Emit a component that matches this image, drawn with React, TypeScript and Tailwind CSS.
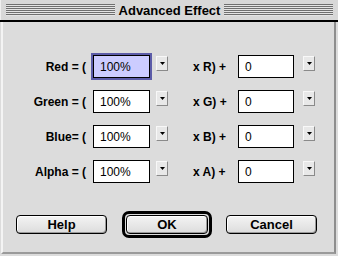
const rows = [
  { label: 'Red = (', right: 'x R) +', focused: true },
  { label: 'Green = (', right: 'x G) +', focused: false },
  { label: 'Blue= (', right: 'x B) +', focused: false },
  { label: 'Alpha = (', right: 'x A) +', focused: false },
]

const font = { fontFamily: '"Liberation Sans", Arial, sans-serif' }

const Stripes = () => (
  <div className="flex-1 h-[12px] bg-[repeating-linear-gradient(to_bottom,#6f6f6f_0px,#6f6f6f_1px,#e4e4e4_1px,#e4e4e4_2px)]" />
)

const Arrow = () => (
  <div className="w-[12px] h-[15px] bg-[#e8e8e8] border border-t-[#f8f8f8] border-l-[#f8f8f8] border-r-[#8a8a8a] border-b-[#8a8a8a] flex items-center justify-center">
    <svg width="5" height="3" viewBox="0 0 5 3">
      <path d="M0 0H5L2.5 3Z" fill="#000" />
    </svg>
  </div>
)

const Field = ({ value, focused, w }: { value: string; focused?: boolean; w: string }) => (
  <div
    className={`${w} h-[23px] flex items-center border border-black pl-[6px] text-[12px] text-black ${
      focused ? 'bg-[#ccccff] outline outline-2 outline-[#5c5ca8]' : 'bg-white'
    }`}
  >
    {value}
  </div>
)

const Button = ({ label, w }: { label: string; w: string }) => (
  <div
    className={`${w} h-[19px] rounded-[4px] border border-black bg-[linear-gradient(to_bottom,#f4f4f4,#dcdcdc)] shadow-[inset_-1px_-1px_0_#9a9a9a,inset_1px_1px_0_#ffffff] flex items-center justify-center text-[13px] font-bold text-black`}
  >
    {label}
  </div>
)

export default function App() {
  return (
    <div className="w-[338px] h-[256px] bg-[#dcdcdc] flex flex-col overflow-hidden" style={font}>
      {/* title bar */}
      <div className="h-[20px] flex items-center px-[5px] bg-[#d8d8d8] border-l border-[#efefef]">
        <Stripes />
        <div className="px-[4px] text-[13px] font-bold text-black leading-none">Advanced Effect</div>
        <Stripes />
      </div>
      <div className="h-[2px] bg-black" />

      {/* body */}
      <div className="flex-1 flex flex-col border-l-2 border-l-[#f4f4f4] border-r-2 border-r-[#8e8e8e] border-b-2 border-b-[#9a9a9a] ml-[1px] mr-[2px] mb-[2px]">
        <div className="flex flex-col gap-[12px] pt-[33px]">
          {rows.map((r) => (
            <div key={r.label} className="flex items-center h-[23px]">
              <div className="w-[83px] text-right text-[12px] font-bold text-black">{r.label}</div>
              <div className="ml-[7px]">
                <Field value="100%" focused={r.focused} w="w-[57px]" />
              </div>
              <div className="ml-[6px] -mt-[6px]">
                <Arrow />
              </div>
              <div className="ml-[25px] w-[45px] text-[12px] font-bold text-black">{r.right}</div>
              <Field value="0" w="w-[56px]" />
              <div className="ml-[9px] -mt-[6px]">
                <Arrow />
              </div>
            </div>
          ))}
        </div>

        <div className="flex items-center mt-[28px] pl-[13px]">
          <Button label="Help" w="w-[91px]" />
          <div className="ml-[15px] rounded-[7px] border-[3px] border-black p-[1px]">
            <Button label="OK" w="w-[82px]" />
          </div>
          <div className="ml-[14px]">
            <Button label="Cancel" w="w-[91px]" />
          </div>
        </div>
      </div>
    </div>
  )
}
